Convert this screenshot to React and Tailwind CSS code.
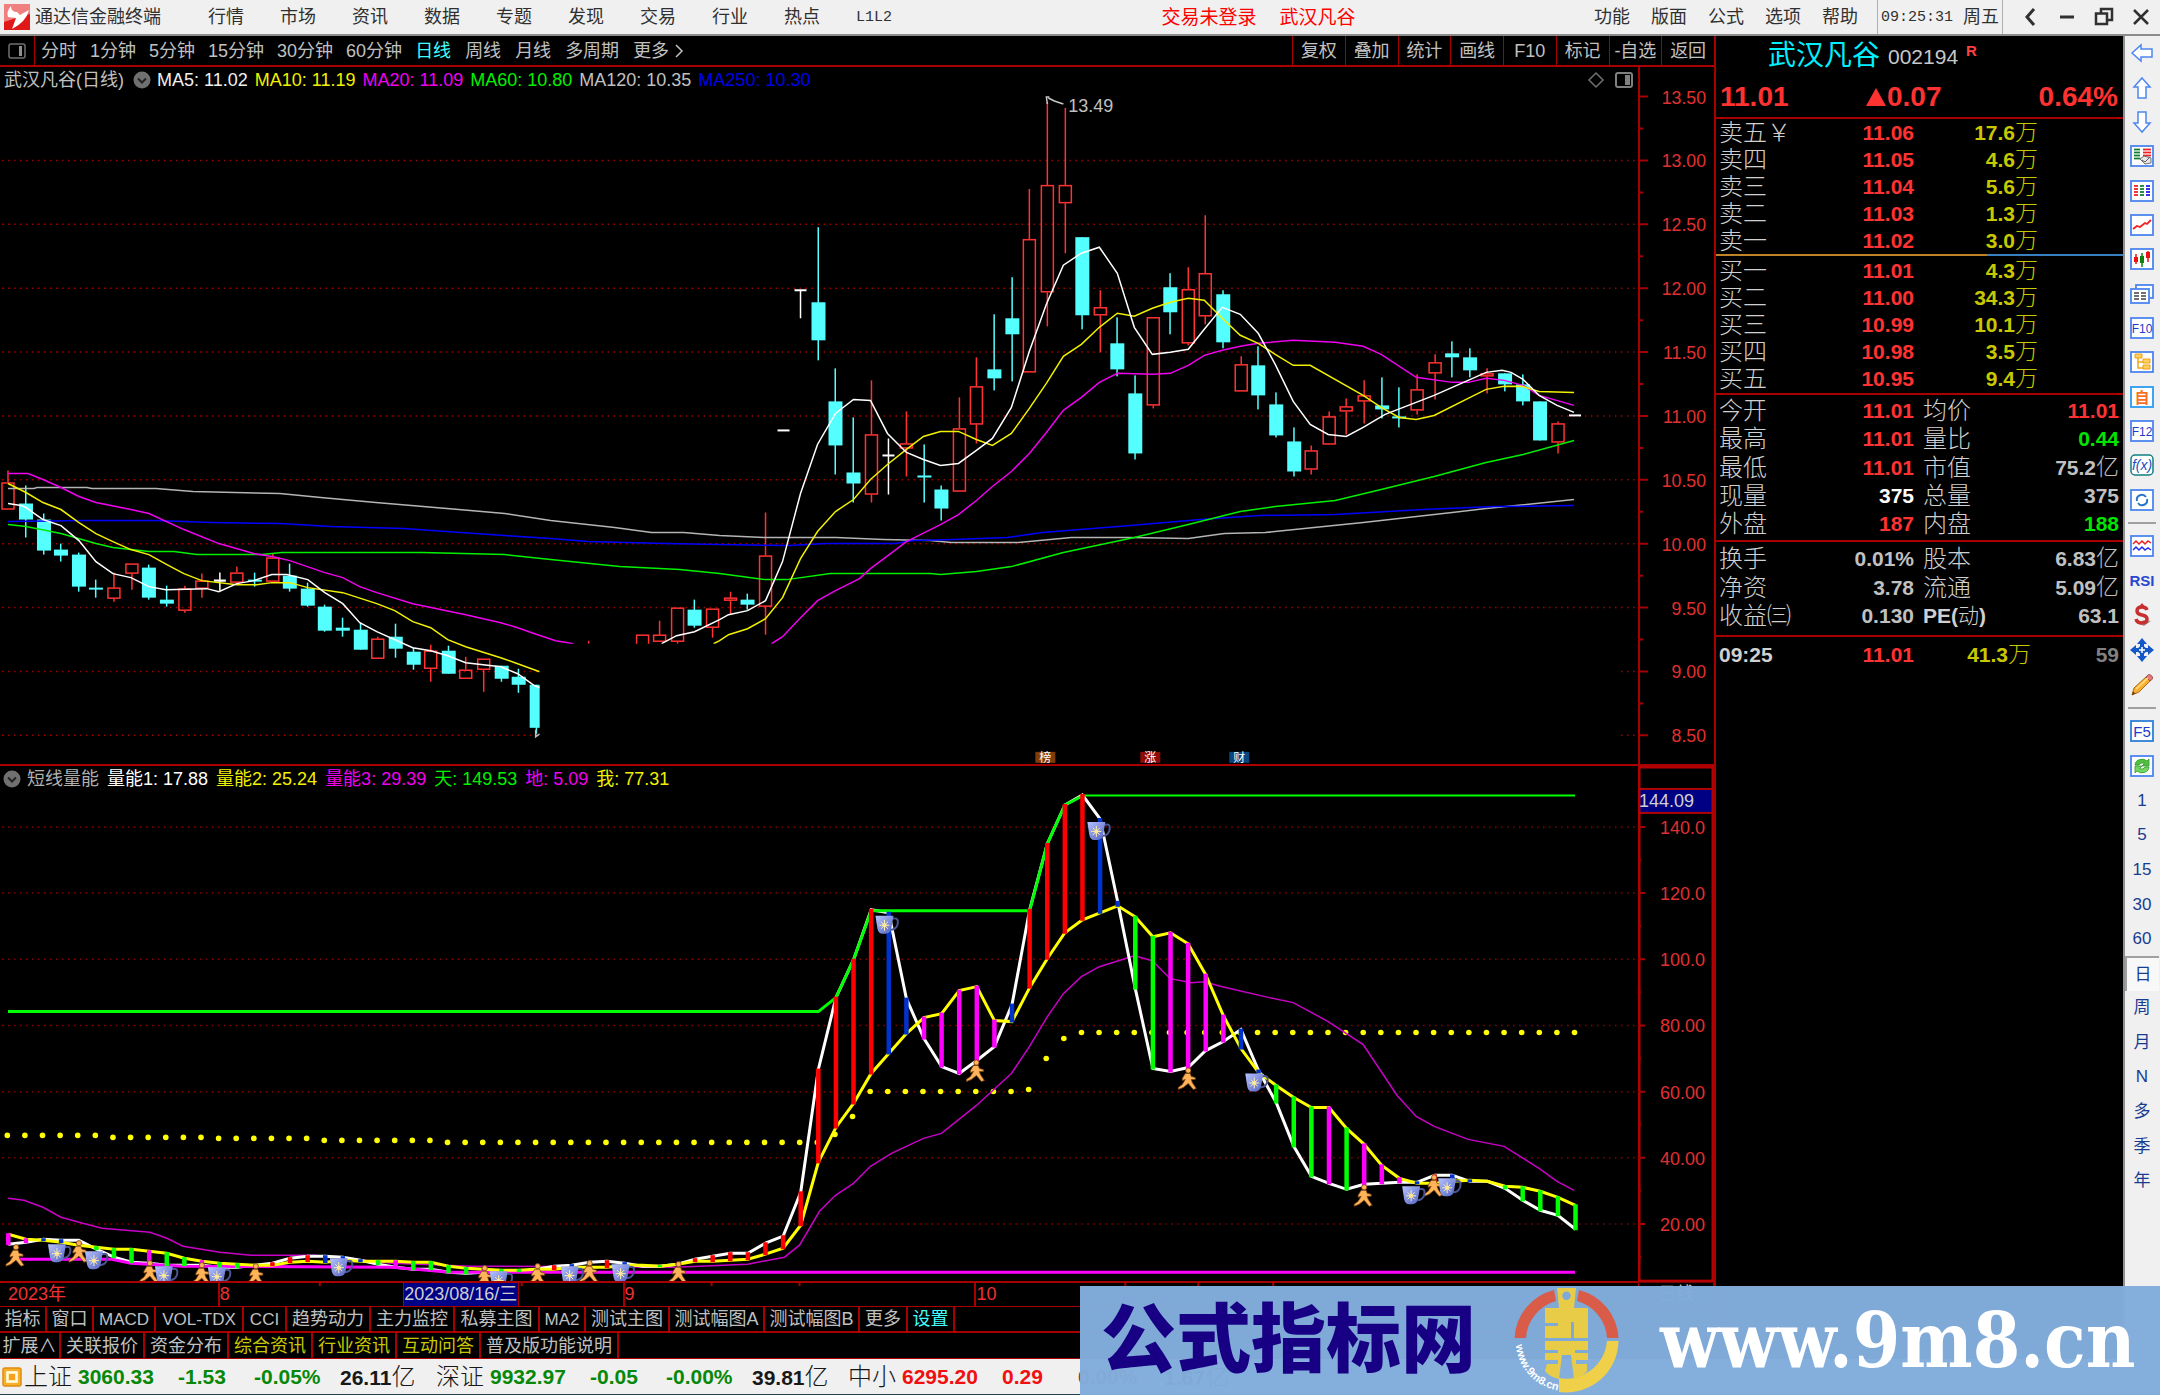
import React from "react";

const SANS = "font-['Liberation_Sans','Noto_Sans_CJK_SC',sans-serif]";
const MONO = "font-['Liberation_Mono','Noto_Sans_CJK_SC',monospace]";

const RED = "#ff3232";
const CYAN = "#54ffff";
const LINE = "#a80000";

const xOf = (i) => 8.3 + 17.62 * i;

/* [index, body top, body bottom, high, low, kind] */
const candles = [
  [0, 482, 509, 470, 509, "r"], [1, 503, 519, 485, 537, "c"], [2, 519, 550, 513, 554, "c"], [3, 549, 555, 543, 561, "c"],
  [4, 554, 586, 552, 591, "c"], [5, 587, 589, 579, 597, "c"], [6, 587, 598, 572, 601, "r"], [7, 563, 573, 563, 589, "r"],
  [8, 567, 597, 564, 599, "c"], [9, 599, 603, 585, 606, "c"], [10, 588, 610, 585, 612, "r"], [11, 580, 588, 573, 597, "r"],
  [12, 580, 580, 572, 590, "w"], [13, 572, 582, 566, 583, "r"], [14, 579, 581, 572, 586, "c"], [15, 557, 581, 553, 581, "r"],
  [16, 575, 588, 563, 591, "c"], [17, 588, 605, 582, 606, "c"], [18, 606, 630, 604, 631, "c"], [19, 627, 630, 617, 636, "c"],
  [20, 629, 649, 622, 649, "c"], [21, 638, 658, 636, 658, "r"], [22, 636, 648, 623, 657, "c"], [23, 651, 664, 647, 669, "c"],
  [24, 650, 668, 644, 681, "r"], [25, 650, 673, 645, 673, "c"], [26, 669, 678, 656, 678, "r"], [27, 658, 669, 658, 691, "r"],
  [28, 665, 678, 665, 681, "c"], [29, 676, 684, 668, 692, "c"], [30, 684, 727, 684, 733, "c"],
  [36, 634, 650, 634, 650, "r"], [37, 634, 641, 620, 641, "r"], [38, 607, 641, 607, 643, "r"], [39, 609, 625, 599, 627, "c"],
  [40, 608, 627, 608, 637, "r"], [41, 597, 600, 591, 614, "r"], [42, 599, 604, 593, 609, "c"], [43, 555, 606, 512, 634, "r"],
  [44, 430, 430, 430, 430, "w"], [45, 290, 290, 290, 318, "w"], [46, 302, 340, 227, 360, "c"], [47, 401, 445, 368, 474, "c"],
  [48, 472, 483, 417, 502, "c"], [49, 434, 494, 380, 502, "r"], [50, 455, 455, 438, 494, "w"], [51, 443, 448, 411, 476, "r"],
  [52, 475, 477, 444, 502, "c"], [53, 489, 508, 485, 520, "c"], [54, 428, 491, 397, 491, "r"], [55, 386, 424, 357, 443, "r"],
  [56, 369, 378, 314, 390, "c"], [57, 318, 334, 277, 381, "c"], [58, 239, 372, 189, 372, "r"], [59, 185, 292, 102, 326, "r"],
  [60, 185, 203, 108, 253, "r"], [61, 237, 315, 237, 329, "c"], [62, 307, 315, 290, 352, "r"], [63, 343, 369, 317, 376, "c"],
  [64, 393, 453, 375, 459, "c"], [65, 317, 405, 317, 408, "r"], [66, 287, 312, 273, 334, "c"], [67, 289, 343, 267, 345, "r"],
  [68, 273, 316, 215, 324, "r"], [69, 294, 342, 290, 348, "c"], [70, 364, 391, 356, 391, "r"], [71, 365, 395, 346, 409, "c"],
  [72, 404, 435, 392, 437, "c"], [73, 441, 471, 427, 476, "c"], [74, 450, 469, 445, 474, "r"], [75, 416, 444, 411, 444, "r"],
  [76, 406, 411, 398, 434, "r"], [77, 395, 401, 380, 423, "r"], [78, 405, 409, 377, 418, "c"], [79, 416, 417, 387, 427, "c"],
  [80, 389, 410, 374, 414, "r"], [81, 362, 373, 354, 399, "r"], [82, 353, 357, 341, 377, "c"], [83, 357, 370, 348, 377, "c"],
  [84, 373, 376, 368, 393, "r"], [85, 373, 384, 373, 391, "c"], [86, 384, 401, 374, 405, "c"], [87, 401, 440, 401, 440, "c"],
  [88, 423, 442, 421, 453, "r"], [89, 415, 415, 415, 415, "w"],
];

const averages = [
  { color: "#b4b4b4", points: "8,488 34,488 37,487 87,487 92,488 156,488 193,491 280,493 321,497 376,502 459,509 505,513 551,520 615,527 652,532 684,532 720,535 766,537 837,537 884,539 931,540 952,542 1019,542 1072,537 1131,537 1189,538 1225,533 1266,532 1364,522 1453,512 1487,508 1575,499" },
  { color: "#0000ff", points: "8,521 87,520 156,520 211,522 280,523 331,526 404,528 432,530 505,535 551,538 588,541 666,543 720,544 790,545 826,543 896,543 914,540 955,539 1008,537 1043,532 1131,525 1201,519 1260,515 1336,514 1424,509 1495,506 1575,505" },
  { color: "#00f000", points: "8,524 26,526 61,533 96,543 113,547 149,551 174,551 197,554 262,554 282,552 422,552 505,554 551,559 620,566 680,569 720,573 766,579 787,579 831,573 931,573 941,574 977,571 1012,566 1064,552 1135,537 1189,524 1241,511 1276,506 1336,500 1382,489 1435,476 1487,462 1524,454 1575,440" },
  { color: "#f000f0", points: "8,473 28,473 43,479 61,487 79,496 96,502 131,509 149,513 184,529 219,543 254,553 272,556 290,560 325,572 343,577 360,586 377,592 413,603 466,614 501,622 518,627 535,633 556,640 574,643" },
  { color: "#f000f0", points: "772,643 783,636 801,617 818,600 836,590 860,578 871,568 907,541 941,524 959,514 977,500 993,486 1012,471 1030,453 1047,432 1064,410 1082,397 1100,382 1118,373 1154,374 1171,373 1189,365 1205,355 1223,350 1241,346 1259,343 1294,340 1336,342 1364,346 1382,354 1417,377 1453,382 1469,382 1487,378 1505,380 1524,385 1540,395 1575,405" },
  { color: "#f0f000", points: "8,483 26,492 43,502 61,509 79,522 96,533 113,541 131,549 149,554 167,564 184,573 202,580 237,584 257,584 272,582 290,582 308,587 343,592 377,603 395,610 413,621 431,627 448,639 466,646 501,657 518,663 540,671" },
  { color: "#f0f000", points: "714,643 720,640 729,634 748,628 766,618 783,597 801,558 818,531 836,511 854,499 871,479 888,464 907,449 924,436 941,431 959,431 977,439 993,445 1012,433 1030,408 1047,383 1064,356 1082,344 1100,327 1118,313 1135,316 1153,308 1171,302 1189,298 1205,300 1223,318 1241,335 1259,343 1276,354 1294,365 1311,365 1364,395 1382,407 1400,417 1417,419 1435,415 1469,398 1487,389 1505,386 1523,386 1540,391 1575,392" },
  { color: "#ffffff", points: "8,503 21,505 26,507 43,519 61,525 79,540 96,561 113,573 131,577 149,586 166,589 207,588 219,591 237,583 254,580 272,574 287,574 308,579 325,592 343,603 360,622 377,631 413,647 431,650 448,655 466,662 501,666 518,673 535,685 540,687" },
  { color: "#ffffff", points: "662,643 677,635 695,631 720,619 729,614 748,610 766,600 783,561 801,493 818,444 836,413 854,399 871,400 888,433 907,452 924,459 941,465 959,463 977,450 993,438 1012,407 1030,351 1047,304 1064,265 1082,253 1100,247 1118,273 1135,327 1153,354 1171,352 1189,349 1205,329 1223,307 1241,314 1259,333 1276,364 1294,401 1311,424 1329,434 1347,436 1364,427 1386,414 1435,395 1469,380 1487,372 1503,370 1512,372 1524,379 1540,395 1558,405 1575,412" },
];

const BAR = { r: "#ff0000", b: "#0033cc", m: "#ff00ff", g: "#00ff00", n: "none" };

/* [fast line, slow line, bar colour] for each trading day */
const energy = [
  [1244, 1234, "m"], [1242, 1239, "m"], [1239, 1240, "b"], [1240, 1242, "b"], [1240, 1245, "n"], [1249, 1247, "g"], [1257, 1249, "g"],
  [1262, 1249, "g"], [1263, 1251, "m"], [1265, 1253, "g"], [1265, 1258, "g"], [1265, 1261, "m"], [1267, 1263, "g"], [1267, 1264, "g"],
  [1265, 1265, "n"], [1263, 1265, "r"], [1258, 1262, "r"], [1256, 1261, "r"], [1256, 1262, "b"], [1257, 1260, "b"], [1260, 1261, "b"],
  [1264, 1261, "g"], [1267, 1261, "m"], [1269, 1262, "g"], [1269, 1262, "g"], [1272, 1266, "g"], [1273, 1268, "g"], [1272, 1269, "m"],
  [1271, 1270, "g"], [1271, 1270, "g"], [1269, 1269, "n"], [1266, 1269, "r"], [1265, 1267, "b"], [1262, 1267, "r"], [1261, 1267, "r"],
  [1263, 1265, "b"], [1266, 1265, "n"], [1266, 1266, "g"], [1264, 1264, "m"], [1259, 1261, "r"], [1256, 1261, "r"], [1253, 1260, "r"],
  [1253, 1259, "r"], [1243, 1254, "r"], [1236, 1248, "r"], [1192, 1225, "r"], [1069, 1162, "r"], [997, 1127, "r"], [959, 1103, "r"],
  [909, 1073, "r"], [912, 1053, "b"], [998, 1033, "b"], [1038, 1017, "m"], [1066, 1013, "m"], [1073, 990, "m"], [1060, 986, "m"],
  [1046, 1020, "m"], [1004, 1021, "b"], [909, 987, "r"], [843, 958, "r"], [804, 932, "r"], [794, 919, "r"], [818, 912, "b"],
  [901, 905, "b"], [988, 916, "g"], [1068, 936, "g"], [1071, 932, "m"], [1067, 943, "m"], [1050, 974, "m"], [1041, 1015, "m"],
  [1029, 1048, "b"], [1070, 1072, "b"], [1102, 1085, "g"], [1146, 1097, "g"], [1176, 1107, "g"], [1183, 1107, "m"], [1189, 1128, "g"],
  [1184, 1144, "m"], [1183, 1165, "m"], [1182, 1178, "m"], [1182, 1183, "b"], [1175, 1183, "r"], [1175, 1181, "b"], [1181, 1180, "b"],
  [1181, 1181, "n"], [1188, 1186, "g"], [1200, 1187, "g"], [1210, 1191, "g"], [1215, 1197, "g"], [1229, 1205, "g"],
];

const dotY = (i) => {
  if (i < 6) return 1135;
  if (i < 12) return 1137;
  if (i < 18) return 1138;
  if (i < 25) return 1140;
  if (i < 47) return 1142;
  if (i === 47) return 1134;
  if (i === 48) return 1116;
  if (i < 58) return 1091;
  if (i === 58) return 1089;
  if (i === 59) return 1058;
  if (i === 60) return 1038;
  return 1032;
};

const slowMagenta =
  "8,1198 24,1200 43,1207 61,1217 79,1222 102,1228 150,1232 167,1238 183,1246 220,1252 251,1255 314,1255 345,1258 392,1263 471,1266 675,1267 748,1264 785,1257 800,1245 820,1211 836,1195 854,1183 871,1166 892,1153 924,1138 942,1133 977,1105 1012,1073 1030,1046 1048,1016 1064,993 1082,976 1100,966 1135,955 1153,960 1171,978 1192,982 1205,981 1223,986 1270,997 1294,1002 1329,1021 1364,1044 1398,1095 1417,1116 1435,1126 1469,1139 1505,1146 1540,1168 1558,1181 1575,1190";

const cups = [
  [886, 924], [1098, 830], [1256, 1082], [1413, 1195], [1449, 1187], [58, 1253], [95, 1260], [165, 1275], [218, 1276],
  [340, 1267], [500, 1280], [571, 1275], [622, 1273],
];
const runners = [
  [976, 1071], [1188, 1079], [1364, 1196], [1434, 1186], [15, 1256], [78, 1252], [149, 1272], [201, 1274], [255, 1275],
  [484, 1277], [537, 1275], [589, 1272], [678, 1273],
];

function Candle({ d }) {
  const [i, top, bottom, high, low, kind] = d;
  const x = Math.round(xOf(i));
  if (kind === "w")
    return (
      <g stroke="#fff" strokeWidth="2">
        <path d={`M${x - 6} ${top}H${x + 6}`} />
        {low > high && <path d={`M${x} ${high}V${low}`} strokeWidth="1.5" />}
      </g>
    );
  if (kind === "c")
    return (
      <g fill={CYAN}>
        <rect x={x - 1} y={high} width="1.5" height={low - high} />
        <rect x={x - 7} y={top} width="14" height={Math.max(2, bottom - top)} />
      </g>
    );
  return (
    <g stroke={RED} strokeWidth="1.5" fill="none">
      {high < top && <path d={`M${x} ${high}V${top}`} />}
      {low > bottom && <path d={`M${x} ${bottom}V${low}`} />}
      <rect x={x - 6} y={top + 0.5} width="12" height={bottom - top - 1} />
    </g>
  );
}

function Cup({ x, y }) {
  return (
    <g transform={`translate(${x} ${y})`}>
      <path d="M7 -6Q14 -8 12 0Q10 5 5 5" fill="none" stroke="#4a5490" strokeWidth="2" />
      <path d="M-10 -9H8L6 3Q5 9 0 9H-3Q-7 9 -8 4Z" fill="url(#cup)" />
      <path d="M-1 -5V6M-6 0.5H4M-4.500 -3L2.500 4M2.500 -3L-4.500 4" stroke="#fff2b0" strokeWidth="1" />
      <circle cx="-1" cy="0.5" r="2" fill="#ffe890" />
    </g>
  );
}

function Runner({ x, y }) {
  return (
    <g transform={`translate(${x} ${y})`} fill="#ffb45a" stroke="#7a4310" strokeWidth="0.8">
      <circle cx="1" cy="-9" r="2.600" />
      <path d="M-2 -6L3 -6L4 -3L8 -2L8 0L4 0L5 3L9 9L6 10L1 4L-4 8L-9 10L-9 8L-5 5L-2 0L-5 1L-5 -1Z" />
    </g>
  );
}

const priceTicks = ["13.50", "13.00", "12.50", "12.00", "11.50", "11.00", "10.50", "10.00", "9.50", "9.00", "8.50"];
const priceY = (k) => 96.5 + 63.8 * k;
const energyTicks = ["140.0", "120.0", "100.0", "80.00", "60.00", "40.00", "20.00"];
const energyTickY = (k) => 826 + 66.3 * k;

function Badge({ x, fill, children }) {
  return (
    <g>
      <rect x={x - 10} y="751" width="20" height="11" fill={fill} />
      <text x={x} y="761" textAnchor="middle" fontSize="12" fill="#fff">{children}</text>
    </g>
  );
}

function PriceChart() {
  return (
    <svg viewBox="0 93 1639 670" preserveAspectRatio="none" className="min-h-0 w-full flex-1" aria-label="日线K线图">
      <defs>
        <clipPath id="seen">
          <path d="M0 93H1639V763H1020V643H540V763H0Z" />
        </clipPath>
      </defs>
      <g stroke="#a00000" strokeWidth="1.500" strokeDasharray="1.500 4.500">
        {priceTicks.map((t, k) =>
          k === 0 ? null : k < 9 ? (
            <path key={t} d={`M2 ${priceY(k)}H1639`} />
          ) : (
            <path key={t} d={`M2 ${priceY(k)}H540M1622 ${priceY(k)}H1639`} />
          )
        )}
      </g>
      <g clipPath="url(#seen)">
        {candles.map((d) => <Candle key={d[0]} d={d} />)}
        {averages.map((a, k) => (
          <polyline key={k} points={a.points} fill="none" stroke={a.color} strokeWidth="1.500" />
        ))}
        <path d="M589 640V643" stroke={RED} strokeWidth="1.500" />
        <path d="M536 729V736L540 733" stroke="#c0c0c0" fill="none" strokeWidth="1.500" />
      </g>
      <path d="M1050 97H1047L1048 104M1049 98L1055 101L1064 104" stroke="#c8c8c8" fill="none" strokeWidth="1.500" />
      <text x="1069" y="112" fontSize="18" fill="#c0c0c0">13.49</text>
      <Badge x={1046} fill="#803c08">榜</Badge>
      <Badge x={1151} fill="#8c0a0a">涨</Badge>
      <Badge x={1240} fill="#0c4480">财</Badge>
    </svg>
  );
}

function PriceAxis() {
  return (
    <svg viewBox="0 67 75 696" preserveAspectRatio="none" className="h-full w-full">
      {priceTicks.map((t, k) => (
        <g key={t}>
          <path d={`M0 ${priceY(k)}H8M0 ${priceY(k) + 32}H3`} stroke={LINE} strokeWidth="2" />
          <text x="67" y={priceY(k) + 7} textAnchor="end" fontSize="18" fill="#e03030">{t}</text>
        </g>
      ))}
    </svg>
  );
}

function EnergyChart() {
  const line = (k) => energy.map((e, i) => `${xOf(i)},${e[k]}`).join(" ");
  const top = [[8, 1011], [xOf(46), 1011], [xOf(47), 997], [xOf(48), 959], [xOf(49), 910], [xOf(58), 910], [xOf(59), 843], [xOf(60), 804], [xOf(61), 795]];
  return (
    <svg viewBox="0 791 1639 490" preserveAspectRatio="none" className="min-h-0 w-full flex-1" aria-label="短线量能">
      <defs>
        <linearGradient id="cup" x1="0" y1="0" x2="1" y2="1">
          <stop offset="0" stopColor="#b8c4ff" />
          <stop offset="1" stopColor="#5060c0" />
        </linearGradient>
      </defs>
      <g stroke="#8a0000" strokeWidth="1.500" strokeDasharray="1.500 4.500">
        {energyTicks.map((t, k) => <path key={t} d={`M2 ${energyTickY(k)}H1639`} />)}
      </g>
      {energy.map((e, i) => <circle key={i} cx={xOf(i) - 1} cy={dotY(i)} r="2.800" fill="#ffff00" />)}
      <polyline points={slowMagenta} fill="none" stroke="#c800c8" strokeWidth="1.500" />
      <polyline points={line(0)} fill="none" stroke="#fff" strokeWidth="3" />
      <polyline points="20,1259 112,1259 131,1263 183,1266 392,1267 450,1272 1576,1272" fill="none" stroke="#ff00ff" strokeWidth="3" />
      <polyline points={top.map((p) => p.join(",")).join(" ")} fill="none" stroke="#00ff00" strokeWidth="3" />
      <path d={`M${xOf(61)} 794.500H1576`} stroke="#00ff00" strokeWidth="2" />
      <polyline points={line(1)} fill="none" stroke="#ffff00" strokeWidth="3" />
      {energy.map((e, i) => (
        <path key={i} d={`M${xOf(i)} ${Math.min(e[0], e[1]) - 1}V${Math.max(e[0], e[1]) + 1}`} stroke={BAR[e[2]]} strokeWidth="4.500" />
      ))}
      {runners.map(([x, y]) => <Runner key={x} x={x} y={y} />)}
      {cups.map(([x, y]) => <Cup key={x} x={x} y={y} />)}
    </svg>
  );
}

function EnergyAxis() {
  return (
    <svg viewBox="0 765 76 518" preserveAspectRatio="none" className="h-full w-full">
      <rect x="1" y="766" width="74" height="515" fill="none" stroke="#b40000" strokeWidth="3" />
      <rect x="1.500" y="788" width="73" height="24" fill="#000084" stroke="#b40000" strokeWidth="2" />
      <text x="1" y="806" fontSize="18" fill="#d0d0d0">144.09</text>
      {energyTicks.map((t, k) => (
        <g key={t}>
          <path d={`M0 ${energyTickY(k)}H7M0 ${energyTickY(k) + 33}H3`} stroke={LINE} strokeWidth="2" />
          <text x="67" y={energyTickY(k) + 7} textAnchor="end" fontSize="18" fill="#e03030">{t}</text>
        </g>
      ))}
    </svg>
  );
}

function Drop({ label }) {
  return (
    <button aria-label={label} className="size-[18px] shrink-0">
      <svg viewBox="0 0 18 18">
        <circle cx="9" cy="9" r="8.500" fill="#707070" />
        <path d="M5 7.500L9 11.500L13 7.500" stroke="#222" strokeWidth="2" fill="none" />
      </svg>
    </button>
  );
}

function TopBar() {
  const left = ["行情", "市场", "资讯", "数据", "专题", "发现", "交易", "行业", "热点"];
  const right = ["功能", "版面", "公式", "选项", "帮助"];
  return (
    <header className="flex h-[36px] shrink-0 items-center border-b-2 border-[#8c8c8c] bg-[#f0f0f0] text-[18px] leading-none text-[#303030]">
      <svg viewBox="0 0 26 26" className="ml-[4px] size-[26px] shrink-0" aria-hidden="true">
        <rect width="26" height="26" fill="#e01818" />
        <path d="M0 0H26V10L12 14L0 18Z" fill="#f08080" />
        <path d="M7 2Q2 8 4 13L12 14L8 25Q22 18 25 6L16 11L13 8Q7 8 7 2Z" fill="#fff" />
      </svg>
      <span className="ml-[5px] whitespace-nowrap">通达信金融终端</span>
      <nav className="ml-[47px] flex shrink-0 items-center gap-[36px]">
        {left.map((t) => <button key={t} className="whitespace-nowrap">{t}</button>)}
        <button className={`text-[15px] ${MONO}`}>L1L2</button>
      </nav>
      <div className="flex flex-1 items-center justify-center gap-[23px] pl-[31px] text-[19px] whitespace-nowrap text-[#ff0000]">
        <button>交易未登录</button>
        <button>武汉凡谷</button>
      </div>
      <nav className="flex shrink-0 items-center gap-[21px]">
        {right.map((t) => <button key={t} className="whitespace-nowrap">{t}</button>)}
      </nav>
      <div className="ml-[19px] flex h-full shrink-0 items-center gap-[10px] border-x border-[#b0b0b0] px-[3px]">
        <time className={`text-[15px] ${MONO}`}>09:25:31</time>
        <span>周五</span>
      </div>
      <div className="grid w-[157px] shrink-0 grid-cols-4 place-items-center pl-[8px] text-[#303030]">
        <button aria-label="后退"><svg viewBox="0 0 18 20" className="h-[20px] w-[18px]"><path d="M13 2L6 10L13 18" stroke="currentColor" strokeWidth="3" fill="none" /></svg></button>
        <button aria-label="最小化"><svg viewBox="0 0 18 20" className="h-[20px] w-[18px]"><path d="M2 10H16" stroke="currentColor" strokeWidth="3" /></svg></button>
        <button aria-label="还原"><svg viewBox="0 0 20 20" className="size-[20px]"><path d="M7 6V2H18V13H14M2 6.500H13V17H2Z" stroke="currentColor" strokeWidth="2.500" fill="none" /></svg></button>
        <button aria-label="关闭"><svg viewBox="0 0 20 20" className="size-[20px]"><path d="M3 3L17 17M17 3L3 17" stroke="currentColor" strokeWidth="2.500" /></svg></button>
      </div>
    </header>
  );
}

function Toolbar() {
  const minutes = ["分时", "1分钟", "5分钟", "15分钟", "30分钟", "60分钟"];
  const periods = ["日线", "周线", "月线", "多周期"];
  const tools = ["复权", "叠加", "统计", "画线", "F10", "标记", "-自选", "返回"];
  return (
    <div className="flex h-[31px] shrink-0 items-stretch border-b-2 border-[#a80000] text-[18px] leading-none text-[#c0c0c0]">
      <button aria-label="侧栏" className="flex w-[35px] items-center justify-center border-r border-[#a80000]">
        <svg viewBox="0 0 18 16" className="h-[16px] w-[18px]"><rect x="1" y="1" width="16" height="14" rx="2" fill="none" stroke="#707070" strokeWidth="1.500" /><rect x="11" y="3" width="3" height="10" fill="#909090" /></svg>
      </button>
      <div className="ml-[6px] flex items-center gap-[13px]">
        {minutes.map((p) => <button key={p} className="whitespace-nowrap">{p}</button>)}
      </div>
      <div className="ml-[13px] flex items-center gap-[14px]">
        {periods.map((p) => (
          <button key={p} className={p === "日线" ? "whitespace-nowrap text-[#40ffff]" : "whitespace-nowrap"}>{p}</button>
        ))}
        <button className="flex items-center gap-[6px] whitespace-nowrap">更多
          <svg viewBox="0 0 9 16" className="h-[16px] w-[9px]"><path d="M1 2L7 8L1 14" fill="none" stroke="currentColor" strokeWidth="1.500" /></svg>
        </button>
      </div>
      <div className="ml-auto grid w-[422px] shrink-0 grid-cols-8">
        {tools.map((t) => (
          <button key={t} className="border-l border-[#a80000] text-center whitespace-nowrap">{t}</button>
        ))}
      </div>
    </div>
  );
}

const maLabels = [
  ["MA5: 11.02", "text-[#f0f0f0]"], ["MA10: 11.19", "text-[#f0f000]"], ["MA20: 11.09", "text-[#f000f0]"],
  ["MA60: 10.80", "text-[#00f000]"], ["MA120: 10.35", "text-[#c0c0c0]"], ["MA250: 10.30", "text-[#0000e8]"],
];
const energyLabels = [
  ["量能1: 17.88", "text-[#ffffff]"], ["量能2: 25.24", "text-[#f0f000]"], ["量能3: 29.39", "text-[#f000f0]"],
  ["天: 149.53", "text-[#00f000]"], ["地: 5.09", "text-[#f000f0]"], ["我: 77.31", "text-[#f0f000]"],
];

function Charts() {
  return (
    <>
      <section className="flex min-h-[300px] flex-[698] basis-0 border-b-2 border-[#a80000]">
        <div className="flex min-w-0 flex-1 flex-col">
          <div className="flex h-[26px] shrink-0 items-center pl-[4px] text-[18px] leading-none whitespace-nowrap">
            <h2 className="text-[#c0c0c0]">武汉凡谷(日线)</h2>
            <div className="ml-[9px] flex items-center gap-[6px]">
              <Drop label="主图指标" />
              <div className="flex gap-[7px]">
                {maLabels.map(([t, c]) => <span key={t} className={c}>{t}</span>)}
              </div>
            </div>
            <div className="ml-auto flex items-center gap-[10px] pr-[5px]">
              <svg viewBox="0 0 18 18" className="size-[18px]"><path d="M9 2L16 9L9 16L2 9Z" fill="none" stroke="#707070" strokeWidth="1.500" /></svg>
              <svg viewBox="0 0 18 16" className="h-[16px] w-[18px]"><rect x="1" y="1" width="16" height="14" rx="2" fill="none" stroke="#808080" strokeWidth="2" /><rect x="10" y="3" width="5" height="10" fill="#808080" /></svg>
            </div>
          </div>
          <PriceChart />
        </div>
        <div className="w-[76px] shrink-0 border-l-2 border-[#a80000]"><PriceAxis /></div>
      </section>
      <section className="flex min-h-[240px] flex-[518] basis-0">
        <div className="flex min-w-0 flex-1 flex-col border-b-2 border-[#a80000]">
          <div className="flex h-[26px] shrink-0 items-center gap-[8px] pl-[3px] text-[18px] leading-none whitespace-nowrap">
            <div className="flex items-center gap-[6px]">
              <Drop label="副图指标" />
              <h2 className="text-[#b0b0b0]">短线量能</h2>
            </div>
            {energyLabels.map(([t, c]) => <span key={t} className={c}>{t}</span>)}
          </div>
          <EnergyChart />
        </div>
        <div className="w-[76px] shrink-0"><EnergyAxis /></div>
      </section>
    </>
  );
}

function DateRow() {
  return (
    <div className="relative grid h-[23px] shrink-0 grid-cols-[218fr_185fr_116fr_104fr_352fr_664fr_76px] items-stretch text-[18px] leading-[23px] whitespace-nowrap text-[#f03030]">
      <span className="pl-[8px]">2023年</span>
      <span className="border-l-2 border-[#a80000]">8</span>
      <span className="border-x border-[#a80000] bg-[#000084] text-center text-[#d0d0d0]">2023/08/16/三</span>
      <span />
      <span className="border-l-2 border-[#a80000]">9</span>
      <span className="border-l-2 border-[#a80000]">10</span>
      <span className="border-x border-[#a80000] text-center text-[#c0c0c0]">日线</span>
      <svg viewBox="0 0 1715 5" preserveAspectRatio="none" className="absolute top-0 left-0 h-[5px] w-full" aria-hidden="true">
        <path d="M320 0V3M522 0V3M712 0V3M800 0V3M1126 0V5M1199 0V5M1274 0V5" stroke={LINE} strokeWidth="2" />
      </svg>
    </div>
  );
}

function Tabs() {
  const first = ["指标", "窗口", "MACD", "VOL-TDX", "CCI", "趋势动力", "主力监控", "私募主图", "MA2", "测试主图", "测试幅图A", "测试幅图B", "更多", "设置"];
  const second = ["扩展∧", "关联报价", "资金分布", "综合资讯", "行业资讯", "互动问答", "普及版功能说明"];
  const cell = "border-r-2 border-[#a80000] text-center whitespace-nowrap";
  return (
    <>
      <div className="grid h-[26px] shrink-0 grid-cols-[47px_47px_62px_88px_43px_84px_84px_85px_46px_84px_95px_95px_48px_47px] border-y border-[#a80000] text-[18px] leading-none text-[#c0c0c0]">
        {first.map((t) => (
          <button key={t} className={`${cell} ${/^[A-Z]/.test(t) ? "text-[17px]" : ""} ${t === "设置" ? "text-[#40ffff]" : ""}`}>{t}</button>
        ))}
      </div>
      <div className="grid h-[27px] shrink-0 grid-cols-[61px_84px_84px_84px_84px_84px_138px] border-y border-[#a80000] text-[18px] leading-none text-[#c0c0c0]">
        {second.map((t, i) => (
          <button key={t} className={`${cell} ${i > 2 && i < 6 ? "text-[#c8c800]" : ""}`}>{t}</button>
        ))}
      </div>
    </>
  );
}

const sells = [["卖五", "11.06", "17.6"], ["卖四", "11.05", "4.6"], ["卖三", "11.04", "5.6"], ["卖二", "11.03", "1.3"], ["卖一", "11.02", "3.0"]];
const buys = [["买一", "11.01", "4.3"], ["买二", "11.00", "34.3"], ["买三", "10.99", "10.1"], ["买四", "10.98", "3.5"], ["买五", "10.95", "9.4"]];
const W = "text-[#c0c0c0]", R = "text-[#ff3232]", G = "text-[#00e600]", B = "text-[#ffffff]";
const stats = [
  ["今开", "11.01", R, "均价", "11.01", "", R], ["最高", "11.01", R, "量比", "0.44", "", G], ["最低", "11.01", R, "市值", "75.2", "亿", W],
  ["现量", "375", B, "总量", "375", "", W], ["外盘", "187", R, "内盘", "188", "", G],
];
const basics = [
  ["换手", "0.01%", W, "股本", "6.83", "亿", W], ["净资", "3.78", W, "流通", "5.09", "亿", W], ["收益㈢", "0.130", W, "PE(动)", "63.1", "", W],
];

function Book({ rows }) {
  return (
    <table className="w-full table-fixed text-[21px] leading-[27px] font-bold">
      <tbody>
        {rows.map(([n, p, v]) => (
          <tr key={n} className="h-[27px]">
            <th scope="row" className="w-[100px] p-0 pl-[3px] text-left text-[24px] font-light whitespace-nowrap text-[#d0d0d0]">{n}{n === "卖五" && "￥"}</th>
            <td className="w-[98px] p-0 text-right text-[#ff3232]">{p}</td>
            <td className="w-[124px] p-0 text-right text-[#c8c800]">{v}<span className="text-[23px] font-light">万</span></td>
            <td className="p-0" />
          </tr>
        ))}
      </tbody>
    </table>
  );
}

function Facts({ rows }) {
  return (
    <table className="w-full table-fixed text-[21px] leading-[28px] font-bold">
      <tbody>
        {rows.map(([a, av, ac, b, bv, unit, bc]) => (
          <tr key={a} className="h-[28px]">
            <th scope="row" className="w-[90px] p-0 pl-[3px] text-left text-[24px] font-light whitespace-nowrap text-[#d0d0d0]">{a}</th>
            <td className={`w-[108px] p-0 text-right ${ac}`}>{av}</td>
            <th scope="row" className={`w-[90px] p-0 pl-[9px] text-left whitespace-nowrap text-[#d0d0d0] ${a === "收益㈢" ? "text-[21px] font-bold" : "text-[24px] font-light"}`}>
              {b === "PE(动)" ? <>PE(<span className="font-light">动</span>)</> : b}
            </th>
            <td className={`p-0 pr-[4px] text-right ${bc}`}>{bv}{unit && <span className="text-[23px] font-light">{unit}</span>}</td>
          </tr>
        ))}
      </tbody>
    </table>
  );
}

function Quote() {
  return (
    <aside className="w-[409px] shrink-0 border-l-2 border-[#a80000] bg-black leading-none">
      <div className="flex h-[40px] items-center pl-[52px]">
        <h1 className="text-[28px] text-[#00f0ff]">武汉凡谷</h1>
        <span className="ml-[8px] text-[21px] text-[#c8c8c8]">002194</span>
        <span className="mb-[12px] ml-[8px] text-[15px] font-bold text-[#ff4040]">R</span>
      </div>
      <div className="grid h-[43px] grid-cols-[146px_1fr_auto] items-center border-b-2 border-[#a80000] pr-[5px] pl-[4px] text-[28px] font-bold text-[#ff3232]">
        <span>11.01</span>
        <span className="flex items-center">
          <svg viewBox="0 0 20 18" className="mr-[1px] h-[18px] w-[20px]"><path d="M10 0L20 18H0Z" fill="currentColor" /></svg>0.07
        </span>
        <span>0.64%</span>
      </div>
      <Book rows={sells} />
      <div className="flex h-[2px]">
        <span className="w-2/3 bg-[#c08428]" />
        <span className="flex-1 bg-[#3880c0]" />
      </div>
      <div className="border-b-2 border-[#a80000] py-[1px]"><Book rows={buys} /></div>
      <div className="border-b-2 border-[#a80000] py-[2px]"><Facts rows={stats} /></div>
      <div className="border-b-2 border-[#a80000] pt-[2px] pb-[5px]"><Facts rows={basics} /></div>
      <div className="grid h-[34px] grid-cols-[100px_98px_117px_1fr] items-center text-right text-[21px] font-bold">
        <span className="pl-[3px] text-left text-[#d0d0d0]">09:25</span>
        <span className="text-[#ff3232]">11.01</span>
        <span className="text-[#c8c800]">41.3<span className="text-[23px] font-light">万</span></span>
        <span className="pr-[4px] text-[#808080]">59</span>
      </div>
    </aside>
  );
}

function Frame({ children, stroke = "#4c86f0" }) {
  return (
    <svg viewBox="0 0 24 22" className="h-[22px] w-[24px]">
      <rect x="1" y="1" width="22" height="20" fill="#fff" stroke={stroke} strokeWidth="1.800" />
      {children}
    </svg>
  );
}
const frameText = (t) => <text x="12" y="16" fontSize="12" textAnchor="middle" fill="#1c3ccc">{t}</text>;
const Arrow = ({ turn }) => (
  <svg viewBox="0 0 24 24" className="size-[24px]">
    <path transform={`rotate(${turn} 12 12)`} d="M2 12L11 4V8H22V16H11V20Z" fill="#fff" stroke="#4c86f0" strokeWidth="1.500" />
  </svg>
);
const rows = (x, w, c, ys) => ys.map((y) => <path key={`${x}-${y}`} d={`M${x} ${y}h${w}`} stroke={c} strokeWidth="1.800" />);

const sideTop = [
  ["后退", <Arrow turn={0} />],
  ["上移", <Arrow turn={90} />],
  ["下移", <Arrow turn={270} />],
  ["报价", <Frame>{rows(4, 6, "#108030", [4.500, 7.500, 10.500, 13.500])}{rows(13, 8, "#f02020", [4.500, 7.500, 10.500])}<path d="M10 14L14 11L21 13V18L15 19Z" fill="#e8e8e8" stroke="#707070" /><path d="M12 15L15 17L20 12" fill="none" stroke="#606060" /></Frame>],
  ["列表", <Frame>{rows(4, 4, "#f02020", [6, 9, 12, 15])}{rows(10, 4, "#108030", [6, 9, 12, 15])}{rows(16, 4, "#2020f0", [6, 9, 12, 15])}</Frame>],
  ["走势", <Frame><path d="M3 15L7 12L10 13L15 9L17 10L21 6" fill="none" stroke="#f02020" strokeWidth="1.800" /></Frame>],
  ["K线", <Frame><path d="M6 6V16M18 3V14" stroke="#f01010" strokeWidth="1.500" /><path d="M12 5V19" stroke="#108010" strokeWidth="1.500" /><path d="M4 9h4v5h-4zM16 4h4v6h-4z" fill="#f01010" /><path d="M10 8h4v7h-4z" fill="#108010" /></Frame>],
  ["多窗", <svg viewBox="0 0 24 22" className="h-[22px] w-[24px]"><rect x="6" y="2" width="17" height="13" fill="#fff" stroke="#4c86f0" strokeWidth="1.800" /><rect x="1" y="6" width="18" height="14" fill="#fff" stroke="#4c86f0" strokeWidth="1.800" />{rows(4, 5, "#606060", [10, 13, 16])}{rows(11, 5, "#606060", [10, 13, 16])}</svg>],
  ["F10", <Frame>{frameText("F10")}</Frame>],
  ["板块", <Frame><path d="M8 7V17H13M8 11H13" fill="none" stroke="#f0a818" strokeWidth="1.500" /><path d="M5 3h7v4h-7zM13 8h7v4h-7zM13 14h7v4h-7z" fill="#ffd060" stroke="#f0a010" /></Frame>],
  ["自选", <Frame stroke="#2c9cf0"><text x="12" y="16.500" fontSize="15" fontWeight="bold" textAnchor="middle" fill="#f87028">自</text></Frame>],
  ["F12", <Frame>{frameText("F12")}</Frame>],
  ["公式", <svg viewBox="0 0 24 22" className="h-[22px] w-[24px]"><rect x="1" y="1" width="22" height="20" rx="4" fill="#fff" stroke="#108080" strokeWidth="1.500" /><text x="12" y="16" fontSize="14" fontStyle="italic" textAnchor="middle" fill="#1c50c0">f(x)</text></svg>],
  ["周期", <Frame><path d="M7 12A5 5 0 0 1 16 8M17 10A5 5 0 0 1 8 14" fill="none" stroke="#2878c8" strokeWidth="2" /></Frame>],
];
const sideMid = [
  ["叠加", <Frame><path d="M3 9L6 6L9 9L12 6L15 9L18 6L21 8" fill="none" stroke="#f02020" strokeWidth="1.500" /><path d="M3 15L6 12L9 15L12 12L15 15L18 13L21 15" fill="none" stroke="#2030f0" strokeWidth="1.500" /></Frame>],
  ["RSI", <span className="text-[15px] leading-none font-bold text-[#2848d0]">RSI</span>],
  ["资金", <svg viewBox="0 0 20 24" className="h-[24px] w-[20px]"><path d="M5 20L12 23L19 18L12 17Z" fill="#a0a0a0" /><path d="M15 7Q14 4 10 4Q5 4 5 8Q5 11 10 12Q15 13 15 16Q15 20 10 20Q5 20 4 16" fill="none" stroke="#c83030" strokeWidth="3.500" /><path d="M10 0L14 5H6Z" fill="#c83030" /></svg>],
  ["移动", <svg viewBox="0 0 24 24" className="size-[24px]"><path d="M12 0L17 6H7ZM12 24L17 18H7ZM0 12L6 7V17ZM24 12L18 7V17Z" fill="#1458c8" /><path d="M12 5V19M5 12H19" stroke="#1458c8" strokeWidth="4" /><circle cx="12" cy="12" r="4" fill="#1458c8" /><path d="M12 9V15M9 12H15" stroke="#fff" strokeWidth="1.500" /></svg>],
  ["画笔", <svg viewBox="0 0 24 24" className="size-[24px]"><path d="M2 22L4 15L17 3L21 7L9 19Z" fill="#f8b030" stroke="#b06818" /><path d="M16 4L18.500 1.500Q23 2 22.500 6L20 8Z" fill="#e87878" stroke="#a05050" /><path d="M6 16L18 5" stroke="#ffe080" strokeWidth="1.500" /><path d="M2 22L3 18.500L5.500 20.500Z" fill="#604020" /></svg>],
];
const sideEnd = [
  ["F5", <Frame stroke="#2c80d8"><text x="12" y="17" fontSize="15" textAnchor="middle" fill="#1c3ccc">F5</text></Frame>],
  ["刷新", <Frame><path d="M5 10A7 6 0 0 1 17 6L19 4V11H12L14.500 8.500A4 3 0 0 0 9 10Z" fill="#50c040" stroke="#309828" strokeWidth="0.800" /><path d="M19 12A7 6 0 0 1 7 16L5 18V11H12L9.500 13.500A4 3 0 0 0 15 12Z" fill="#70d860" stroke="#309828" strokeWidth="0.800" /></Frame>],
];
const sidePeriods = ["1", "5", "15", "30", "60", "日", "周", "月", "N", "多", "季", "年"];

function SideButton({ item }) {
  return <button aria-label={item[0]} className="flex items-center justify-center">{item[1]}</button>;
}

function Sidebar() {
  return (
    <aside className="w-[37px] shrink-0 border-l-2 border-[#909090] bg-[#f0f0f0] pr-[1px] text-[#183c90]">
      <div className="grid h-[481px] auto-rows-fr">{sideTop.map((s) => <SideButton key={s[0]} item={s} />)}</div>
      <hr className="mx-[3px] my-[5px] border-t-2 border-[#a0a0a0]" />
      <div className="grid h-[173px] auto-rows-fr">{sideMid.map((s) => <SideButton key={s[0]} item={s} />)}</div>
      <hr className="mx-[3px] my-[5px] border-t-2 border-[#a0a0a0]" />
      <div className="grid h-[484px] auto-rows-fr text-[17px] leading-none">
        {sideEnd.map((s) => <SideButton key={s[0]} item={s} />)}
        {sidePeriods.map((p) => (
          <button key={p} className={p === "日" ? "border-t-2 border-l-2 border-[#a0a0a0] bg-[#f8f8f8]" : ""}>{p}</button>
        ))}
      </div>
    </aside>
  );
}

function Index({ name, value, change, percent, amount, tone }) {
  return (
    <div className="flex shrink-0 items-center">
      <span className="w-[54px] text-[24px] font-light">{name}</span>
      <span className={`w-[100px] font-bold ${tone}`}>{value}</span>
      <span className={`w-[76px] font-bold ${tone}`}>{change}</span>
      <span className={`w-[86px] font-bold ${tone}`}>{percent}</span>
      <span className="w-[96px] font-bold">{amount}<span className="text-[24px] font-light">亿</span></span>
    </div>
  );
}

function StatusBar() {
  return (
    <footer className="flex h-[36px] shrink-0 items-center overflow-hidden border-b border-[#204050] bg-[#f0f0f0] text-[21px] leading-none whitespace-nowrap text-[#181818]">
      <svg viewBox="0 0 20 20" className="mr-[2px] ml-[2px] size-[20px] shrink-0" aria-hidden="true">
        <rect x="1" y="1" width="18" height="18" rx="2" fill="#f8b028" stroke="#e08c10" strokeWidth="1.500" />
        <rect x="5" y="5" width="10" height="10" fill="#fff0a0" stroke="#fff" strokeWidth="1.500" />
        <rect x="7" y="7" width="6" height="6" fill="#f8a020" />
      </svg>
      <Index name="上证" value="3060.33" change="-1.53" percent="-0.05%" amount="26.11" tone="text-[#088808]" />
      <Index name="深证" value="9932.97" change="-0.05" percent="-0.00%" amount="39.81" tone="text-[#088808]" />
      <Index name="中小" value="6295.20" change="0.29" percent="0.00%" amount="1.67" tone="text-[#f01010]" />
    </footer>
  );
}

function Banner() {
  return (
    <div className="absolute right-0 bottom-0 flex h-[109px] w-1/2 items-center overflow-hidden bg-[#82acda]/98 pl-[21px] whitespace-nowrap">
      <strong className="text-[75px] leading-none font-black text-[#180084]">公式指标网</strong>
      <svg viewBox="0 0 106 106" className="ml-[38px] h-[106px] w-[106px] shrink-0" aria-hidden="true">
        <path d="M0.500 50A52.500 52 0 0 1 40 2L42 13A41 41 0 0 0 12 50Z" fill="#d85c48" />
        <path d="M65 2A52.500 52 0 0 1 104.500 50H93A41 41 0 0 0 63 13Z" fill="#d85c48" />
        <path d="M104.500 53A52.500 52 0 0 1 45 104V90A41 41 0 0 0 93 53Z" fill="#f0d048" />
        <path fillRule="evenodd" d="M43 0H62L60 20H74V50H31V38H44V35H31V20H45ZM52.500 3.500A4.200 4.200 0 1 0 52.500 12A4.200 4.200 0 1 0 52.500 3.500ZM57 34V50H60V34Z" fill="#e8cc48" />
        <path d="M31 53H74V62H61V65H74V72H62V76H73V83Q68 89 60 91L57 67H48L45 91Q36 89 31 83L33 76H44V72H31V65H44V62H31Z" fill="#e8cc48" />
        <path id="ring" d="M2 57A50 50 0 0 0 42 102" fill="none" />
        <text fontSize="11" fontWeight="bold" fill="#fff"><textPath href="#ring">www.9m8.cn</textPath></text>
      </svg>
      <span className="ml-[40px] font-['DejaVu_Serif_Condensed','DejaVu_Serif',serif] text-[76px] leading-none font-bold text-white">www.9m8.cn</span>
    </div>
  );
}

export default function App() {
  return (
    <div className={`relative flex h-screen min-h-[1280px] w-full flex-col overflow-hidden bg-black ${SANS}`}>
      <TopBar />
      <div className="flex min-h-0 flex-1">
        <main className="flex min-w-0 flex-1 flex-col">
          <Toolbar />
          <Charts />
          <DateRow />
          <Tabs />
        </main>
        <Quote />
        <Sidebar />
      </div>
      <StatusBar />
      <Banner />
    </div>
  );
}
